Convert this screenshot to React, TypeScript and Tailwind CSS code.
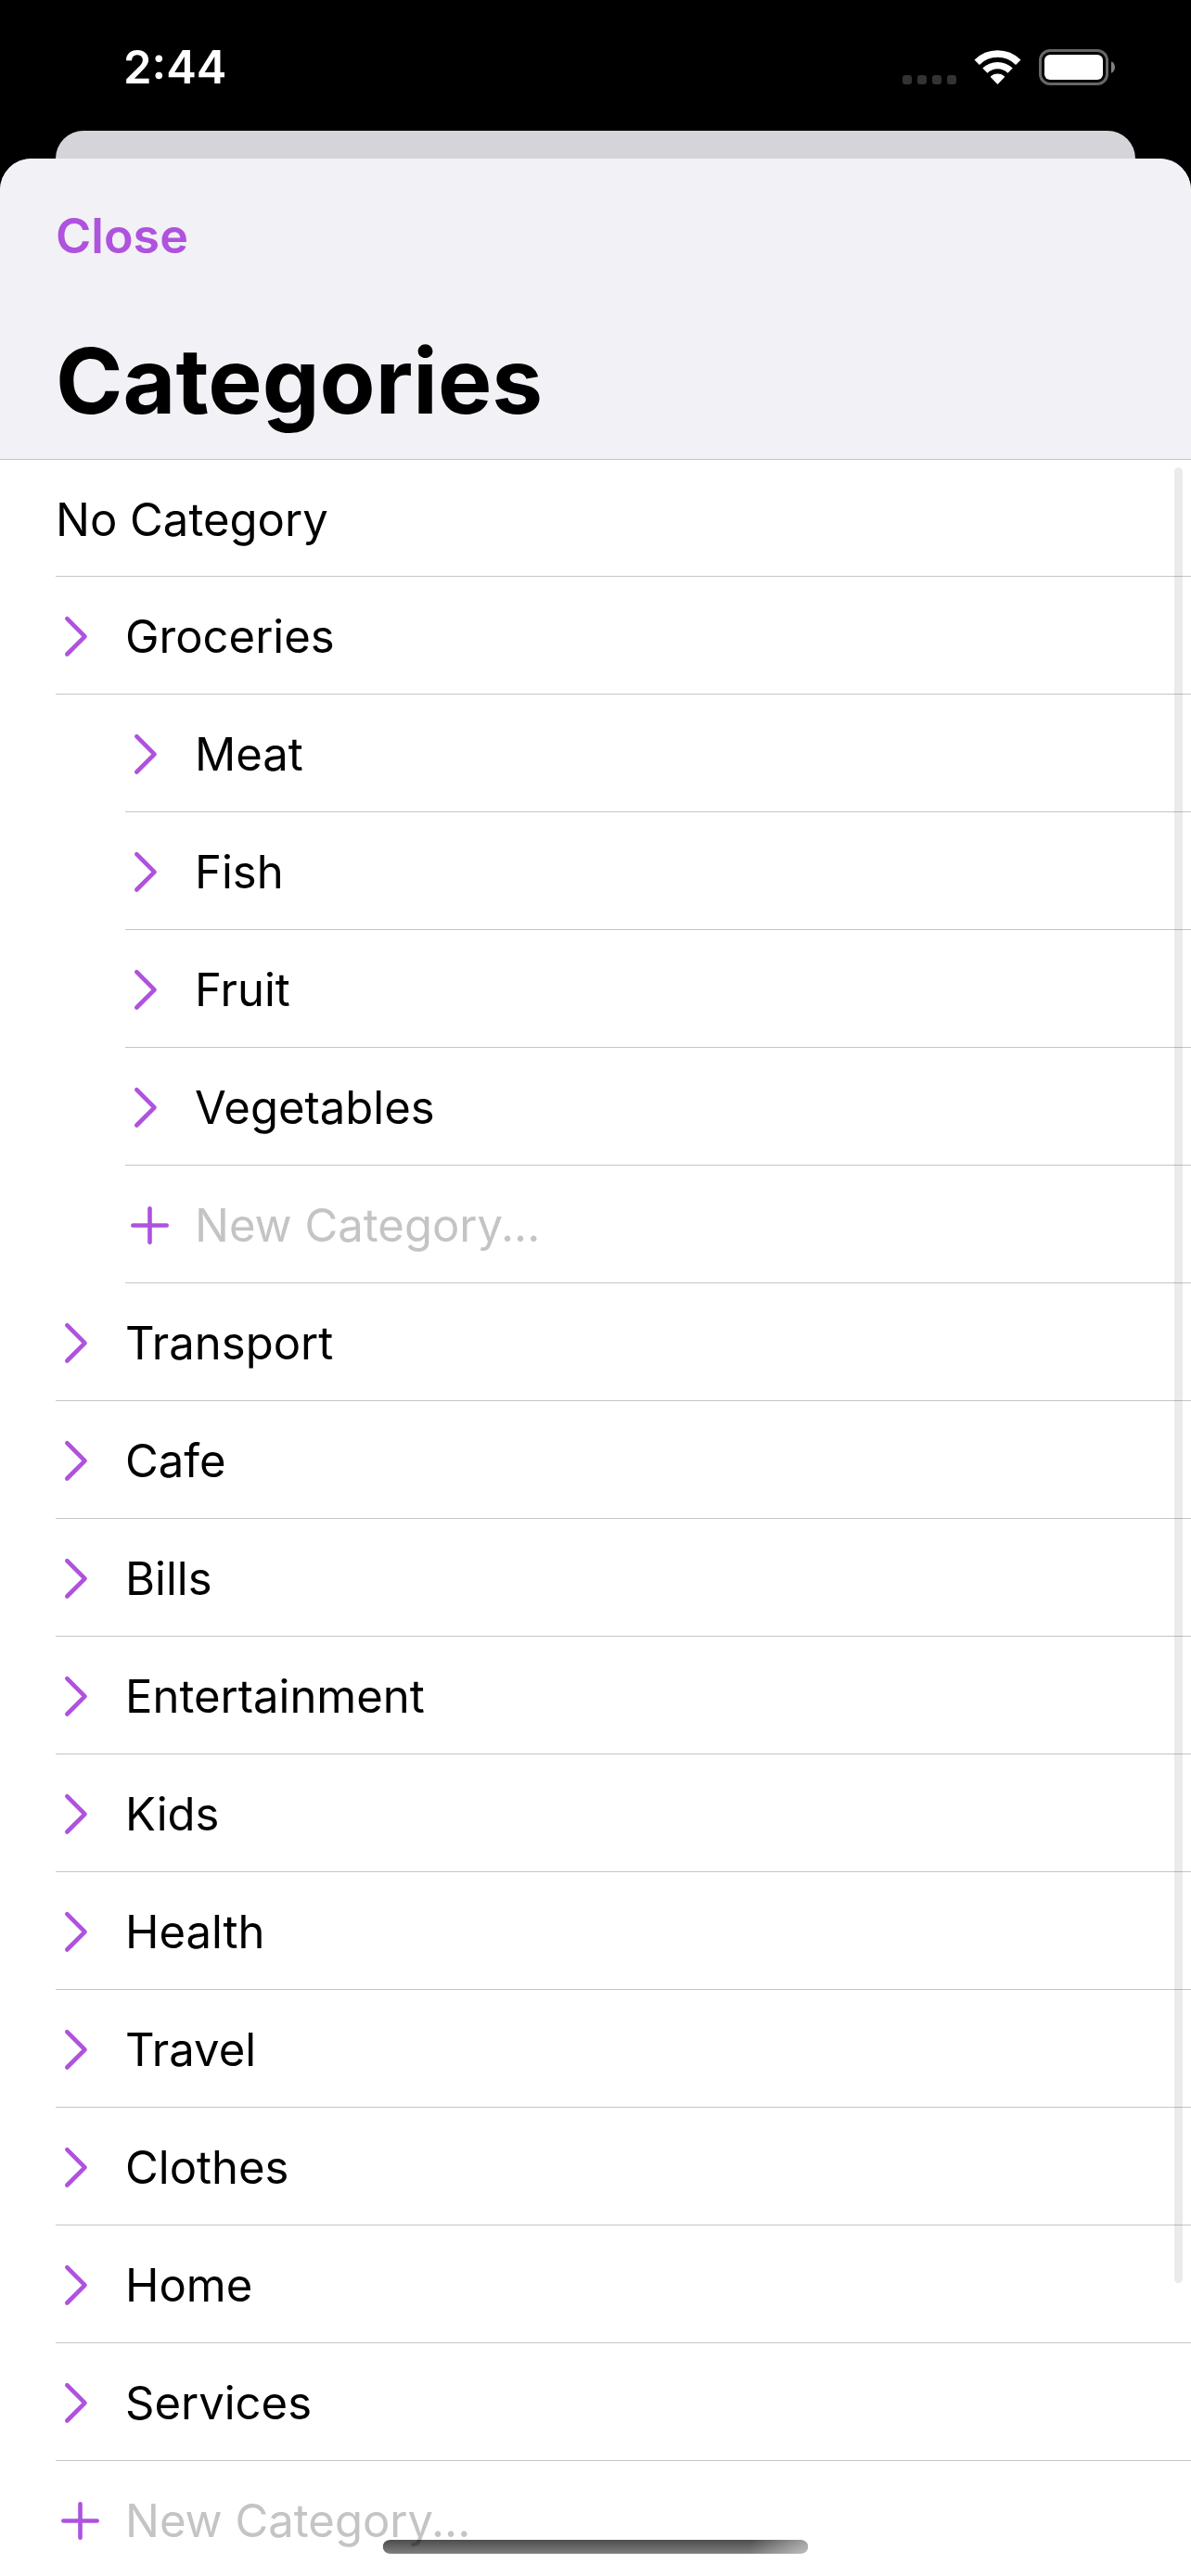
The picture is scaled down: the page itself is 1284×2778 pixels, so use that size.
import type { ReactNode } from "react";

type Item = { name: string; level: 0 | 1; kind: "plain" | "folder" | "new" };

const items: Item[] = [
  { name: "No Category", level: 0, kind: "plain" },
  { name: "Groceries", level: 0, kind: "folder" },
  { name: "Meat", level: 1, kind: "folder" },
  { name: "Fish", level: 1, kind: "folder" },
  { name: "Fruit", level: 1, kind: "folder" },
  { name: "Vegetables", level: 1, kind: "folder" },
  { name: "New Category...", level: 1, kind: "new" },
  { name: "Transport", level: 0, kind: "folder" },
  { name: "Cafe", level: 0, kind: "folder" },
  { name: "Bills", level: 0, kind: "folder" },
  { name: "Entertainment", level: 0, kind: "folder" },
  { name: "Kids", level: 0, kind: "folder" },
  { name: "Health", level: 0, kind: "folder" },
  { name: "Travel", level: 0, kind: "folder" },
  { name: "Clothes", level: 0, kind: "folder" },
  { name: "Home", level: 0, kind: "folder" },
  { name: "Services", level: 0, kind: "folder" },
  { name: "New Category...", level: 0, kind: "new" },
];

function Chevron() {
  return (
    <svg className="h-[52px] w-[52px]" viewBox="0 0 52 52" fill="none" stroke="currentColor" strokeWidth="4.6" strokeLinecap="round" strokeLinejoin="round" aria-hidden="true">
      <path d="M12.3 6.1 31.5 25.3 12.3 44.5" />
    </svg>
  );
}

function Plus() {
  return (
    <svg className="h-[52px] w-[52px]" viewBox="0 0 52 52" fill="none" stroke="currentColor" strokeWidth="4.6" strokeLinecap="round" aria-hidden="true">
      <path d="M26.5 7.3V43.7M8.3 25.5H44.7" />
    </svg>
  );
}

function Wifi() {
  return (
    <svg className="h-[38px] w-[51px]" viewBox="0 0 51 38" fill="none" aria-hidden="true">
      <path d="M3.2 13.2A31.6 31.6 0 0 1 47.8 13.2" stroke="#fff" strokeWidth="7.6" />
      <path d="M11.9 22.2A19.3 19.3 0 0 1 39.1 22.2" stroke="#fff" strokeWidth="7.4" />
      <path d="M18.3 29.4C17.8 28.9 17.9 28.3 18.4 27.9A11.5 11.5 0 0 1 32.6 27.9C33.1 28.3 33.2 28.9 32.7 29.4L25.5 37Z" fill="#fff" />
    </svg>
  );
}

function Battery() {
  return (
    <svg className="h-[39px] w-[82px]" viewBox="0 0 82 39" aria-hidden="true">
      <rect x="1.5" y="1.5" width="72" height="36" rx="10.5" fill="none" stroke="#666" strokeWidth="3" />
      <rect x="6" y="6" width="63" height="27" rx="6" fill="#fff" />
      <path d="M78 13.2C80.6 14.4 82 16.7 82 19.5S80.6 24.6 78 25.8Z" fill="#808080" />
    </svg>
  );
}

function Row({ level, children }: { level: 0 | 1; children: ReactNode }) {
  return (
    <li className={level === 1 ? "group pl-[135px]" : "group pl-[60px]"}>
      <div className="flex h-[127px] items-center border-b border-[#c6c6c8] pt-1 group-first:h-[126px]">{children}</div>
    </li>
  );
}

function Category({ item }: { item: Item }) {
  if (item.kind === "plain") {
    return (
      <Row level={item.level}>
        <button type="button" className="flex-1 text-left">{item.name}</button>
      </Row>
    );
  }
  if (item.kind === "new") {
    const id = `new-category-${item.level}`;
    return (
      <Row level={item.level}>
        <label htmlFor={id} aria-label="New category" className="w-[75px] shrink-0 text-[#af52de]">
          <Plus />
        </label>
        <input id={id} placeholder={item.name} className="min-w-0 flex-1 bg-transparent outline-none placeholder:text-[#c4c4c6]" />
      </Row>
    );
  }
  return (
    <Row level={item.level}>
      <button type="button" aria-label={`Expand ${item.name}`} className="w-[75px] shrink-0 text-[#af52de]">
        <Chevron />
      </button>
      <button type="button" className="flex-1 text-left">{item.name}</button>
    </Row>
  );
}

export default function App() {
  return (
    <div className="relative flex h-screen flex-col overflow-hidden bg-black font-['Inter',sans-serif] text-[49px] leading-[60px] text-black">
      <div className="flex h-[141px] shrink-0 items-center justify-between pt-1 pr-[82px] pl-[133px] text-white">
        <time className="font-semibold">2:44</time>
        <div className="flex items-center">
          <div className="mt-[27px] mr-[19px] flex gap-1.5">
            <span className="size-2.5 rounded-[3px] bg-[#333]" />
            <span className="size-2.5 rounded-[3px] bg-[#333]" />
            <span className="size-2.5 rounded-[3px] bg-[#333]" />
            <span className="size-2.5 rounded-[3px] bg-[#333]" />
          </div>
          <Wifi />
          <div className="ml-[19px]">
            <Battery />
          </div>
        </div>
      </div>

      <div className="mx-[60px] h-[30px] shrink-0 rounded-t-[30px] bg-[#d5d4d9]" />

      <main className="flex min-h-0 flex-1 flex-col overflow-hidden rounded-t-[34px] bg-white">
        <header className="shrink-0 border-b border-[#c6c6c8] bg-[#f2f1f6] px-[60px]">
          <div className="flex h-[168px] items-center">
            <button type="button" className="text-[52px] font-semibold text-[#af52de]">Close</button>
          </div>
          <h1 className="h-[156px] text-[98px] leading-[144px] font-bold">Categories</h1>
        </header>
        <div className="relative min-h-0 flex-1 overflow-hidden">
          <ul>
            {items.map((item, i) => (
              <Category key={i} item={item} />
            ))}
          </ul>
          <div className="absolute top-2 right-[9px] h-[1958px] w-[9px] rounded-full bg-black/8" />
        </div>
      </main>

      <div className="absolute bottom-6 left-1/2 h-[15px] w-[459px] -translate-x-1/2 rounded-full bg-[linear-gradient(to_bottom,rgb(0_0_0/0.7),rgb(0_0_0/0.5))] mask-[linear-gradient(100deg,black_86%,rgb(0_0_0/0.5))]" />
    </div>
  );
}
